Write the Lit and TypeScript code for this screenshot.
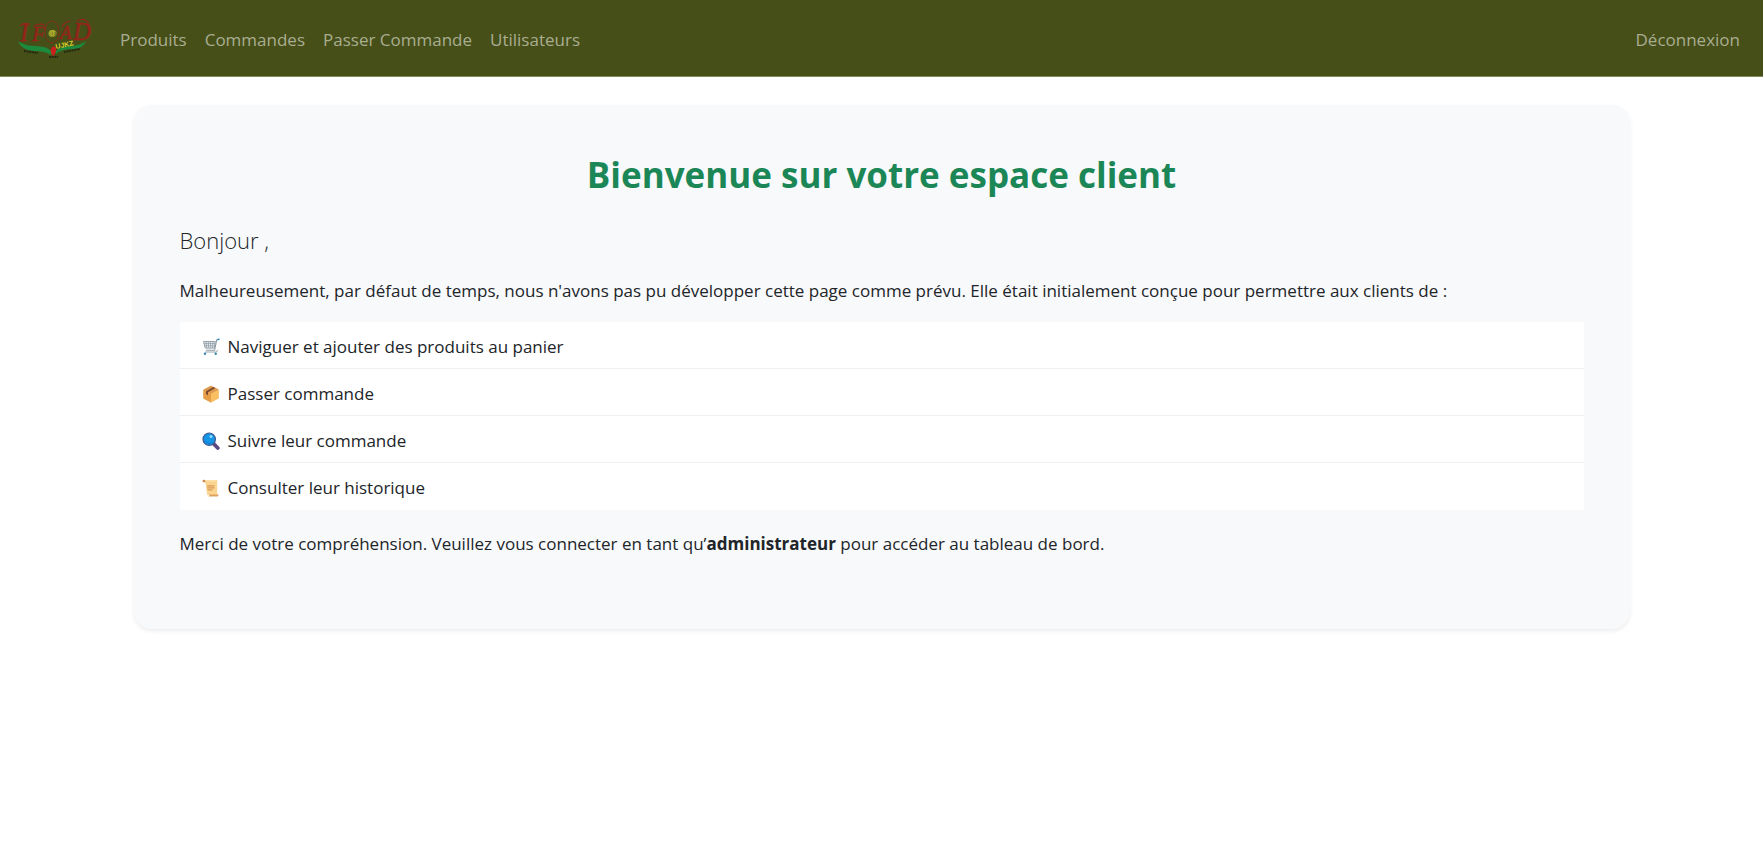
import { LitElement, html, css, svg } from "lit";
import { customElement } from "lit/decorators.js";

const cart = svg`
  <path d="M1.5 3.5h11.8l-1 6.6H3.2z" fill="#e9edf0" stroke="#8d9aa3" stroke-width=".9"/>
  <path d="M4 3.6l.6 6.3M6.3 3.6l.3 6.3M8.6 3.6v6.3M11 3.6l-.5 6.3M1.9 5.6H13M2.5 7.8h10.2" stroke="#8d9aa3" stroke-width=".7"/>
  <path d="M17 1.2l-2.3.8-2.1 10.3H4" fill="none" stroke="#8d9aa3" stroke-width="1.1"/>
  <path d="M17.6.9l-2.3.9" stroke="#2f8fc4" stroke-width="1.4"/>
  <path d="M3 14h11.5l1-2" fill="none" stroke="#9aa7af" stroke-width="1"/>
  <circle cx="3" cy="15.8" r="1.2" fill="#3c86ad"/><circle cx="13.7" cy="15.8" r="1.2" fill="#3c86ad"/>`;

const parcel = svg`
  <path d="M1.4 4.8L9 .8l7.6 3.6v8.8L9 17.6l-7.6-4.2z" fill="#f3b45c"/>
  <path d="M1.4 4.8L9 8.8v8.8l-7.6-4.2z" fill="#e69d48"/>
  <path d="M9 8.8l7.6-4.4v8.8L9 17.6z" fill="#fabf63"/>
  <path d="M1.4 4.8L9 .8l7.6 3.6L9 8.8z" fill="#dc9a50"/>
  <path d="M4 6.2l7.4-4.2 2 1-7.4 4.2v3L4 9.1z" fill="#7f4a2b"/>`;

const lens = svg`
  <path d="M11 11.2l4.8 4.8" stroke="#5c4a85" stroke-width="3.8" stroke-linecap="round"/>
  <circle cx="7.2" cy="7.2" r="6.2" fill="#1495e6" stroke="#41588f" stroke-width="1.2"/>
  <path d="M2.6 7.6a4.7 4.7 0 0 0 8.2 2.6A6 6 0 0 1 2.6 7.6z" fill="#0b78c9"/>
  <circle cx="9" cy="4.5" r="1.5" fill="#8fd8ff"/>`;

const scroll = svg`
  <path d="M3 1h12.2v15H5.2z" fill="#fbd590"/>
  <path d="M3 .9C.8.3-.1 2 1 3.2h2.6z" fill="#c98b4c"/>
  <path d="M3 .9h10.6c1.2 0 1.7.7 1.7 1.6H3.8z" fill="#fde0a6"/>
  <path d="M5.2 6.8h7.2M5.2 8.8h7.2M5.6 10.8h5" stroke="#d99a55" stroke-width="1.2"/>
  <path d="M7.4 15.4h9c.4 1.3-.3 2.1-1.4 2.1H5.6c1.3 0 1.7-.9 1.8-2.1z" fill="#dfa260"/>`;

const features = [
  { icon: cart, label: "Naviguer et ajouter des produits au panier" },
  { icon: parcel, label: "Passer commande" },
  { icon: lens, label: "Suivre leur commande" },
  { icon: scroll, label: "Consulter leur historique" },
];

const links = ["Produits", "Commandes", "Passer Commande", "Utilisateurs"];

@customElement("app-root")
export class AppRoot extends LitElement {
  static styles = css`
    :host {
      display: block;
      min-height: 100vh;
      background: #fff;
      color: #212529;
      font: 17px/27px "Open Sans", "Noto Sans", sans-serif;
    }
    .bar {
      display: flex;
      align-items: center;
      padding: 9px 14px 9px 18px;
      background: #464f18;
      border-bottom: 1px solid #85895f;
    }
    .brand {
      display: flex;
      margin-right: 18px;
    }
    .logo {
      display: block;
      width: 75px;
      height: 58px;
    }
    .menu {
      display: flex;
      flex: 1;
      list-style: none;
      margin: 0;
      padding: 0;
    }
    .last {
      margin-left: auto;
    }
    .link {
      display: block;
      padding: 11px 9px 8px;
      color: #a9ad91;
      text-decoration: none;
    }
    .card {
      box-sizing: border-box;
      width: 85%;
      max-width: 1496px;
      margin: 28px auto;
      padding: 47px 46px 54px;
      background: #f8f9fb;
      border-radius: 18px;
      box-shadow: 0 2px 4px rgba(0, 0, 0, 0.075);
    }
    .title {
      margin: 0 0 26px;
      color: #1c8756;
      font-size: 35px;
      line-height: 46px;
      font-weight: 700;
      text-align: center;
    }
    .lead {
      margin: 0 0 20px;
      font-size: 22px;
      line-height: 33px;
      font-weight: 300;
    }
    .text {
      margin: 0 0 18px;
    }
    .list {
      list-style: none;
      margin: 0 0 20px;
      padding: 0;
    }
    .item {
      display: flex;
      align-items: center;
      gap: 8px;
      padding: 11px 22px 8px;
      background: #fff;
      border-bottom: 1px solid #eeeff0;
    }
    .item:last-child {
      border-bottom-color: #fff;
    }
    .icon {
      width: 18px;
      height: 18px;
      flex: none;
    }
  `;

  render() {
    return html`
      <nav class="bar">
        <a class="brand" href="#" aria-label="Accueil">
          <svg class="logo" viewBox="0 0 75 58">
            <g font-family="Liberation Serif" font-style="italic" fill="#92241a" stroke="#92241a" stroke-width=".5">
              <text x="2" y="32" font-size="25">I</text>
              <text x="14" y="32" font-size="22">F</text>
              <text x="42" y="30" font-size="19">A</text>
              <text x="55" y="31" font-size="25">D</text>
            </g>
            <path d="M2 17q4-4 9-2M16 17q6-3 11-1M44 18q3-6 9-6M59 12q6-4 12 2" fill="none" stroke="#92241a" stroke-width="1.2"/>
            <ellipse cx="34" cy="23" rx="7" ry="11" fill="none" stroke="#80301a" stroke-width="1"/>
            <circle cx="34" cy="24" r="3" fill="#8c8f2a"/>
            <text x="30" y="27" font-family="Liberation Sans" font-size="9" font-weight="700" fill="#b9b82e">@</text>
            <path d="M0 32q7 5 17 5 13 0 17 6l-1 3q-6-4-17-4Q3 41 0 32zM37 43q4-5 14-6 11 0 17-5-2 7-13 8-12 0-17 5z" fill="#1c8a3c"/>
            <path d="M33 40q2-5 5-1 1 4-3 8-3-3-2-7z" fill="#cc201c"/>
            <text x="38" y="40" transform="rotate(-12 38 40)" font-family="Liberation Sans" font-size="7" font-weight="700" fill="#d8cf2c">UJKZ</text>
            <path d="M6 42l14 2M46 43l16-3M31 48h9" stroke="#252b10" stroke-width="2" stroke-dasharray="2 .6"/>
          </svg>
        </a>
        <ul class="menu">
          ${links.map((l) => html`<li><a class="link" href="#">${l}</a></li>`)}
          <li class="last"><a class="link" href="#">Déconnexion</a></li>
        </ul>
      </nav>
      <main class="card">
        <h1 class="title">Bienvenue sur votre espace client</h1>
        <p class="lead">Bonjour ,</p>
        <p class="text">Malheureusement, par défaut de temps, nous n'avons pas pu développer cette page comme prévu. Elle était initialement conçue pour permettre aux clients de :</p>
        <ul class="list">
          ${features.map(
            (f) => html`<li class="item"><svg class="icon" viewBox="0 0 18 18" aria-hidden="true">${f.icon}</svg><span>${f.label}</span></li>`
          )}
        </ul>
        <p class="text">Merci de votre compréhension. Veuillez vous connecter en tant qu’<strong>administrateur</strong> pour accéder au tableau de bord.</p>
      </main>
    `;
  }
}
